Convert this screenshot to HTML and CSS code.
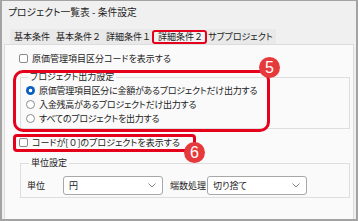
FILE: index.html
```html
<!DOCTYPE html>
<html lang="ja">
<head>
<meta charset="utf-8">
<link rel="stylesheet" href="styles.css">
</head>
<body>
<div class="window">
  <div class="titlebar">プロジェクト一覧表 - 条件設定</div>
  <div class="tabs">
    <span class="tab tab-1">基本条件</span>
    <span class="tab tab-2">基本条件<span class="fw">２</span></span>
    <span class="tab tab-3">詳細条件<span class="fw">１</span></span>
    <span class="tab tab-4 active">詳細条件<span class="fw">２</span></span>
    <span class="tab tab-5">サブプロジェクト</span>
  </div>
  <div class="panel">
    <label class="check-row"><span class="checkbox"></span><span>原価管理項目区分コードを表示する</span></label>
    <fieldset class="group group-output">
      <legend>プロジェクト出力設定</legend>
      <label class="radio-row"><span class="radio checked"></span><span>原価管理項目区分に金額があるプロジェクトだけ出力する</span></label>
      <label class="radio-row"><span class="radio"></span><span>入金残高があるプロジェクトだけ出力する</span></label>
      <label class="radio-row"><span class="radio"></span><span>すべてのプロジェクトを出力する</span></label>
    </fieldset>
    <label class="check-row check-zero"><span class="checkbox"></span><span>コードが[<span class="fw">０</span>]のプロジェクトを表示する</span></label>
    <fieldset class="group group-unit">
      <legend>単位設定</legend>
      <div class="unit-row">
        <span class="field-label">単位</span>
        <span class="select select-unit"><span>円</span><svg class="chev" viewBox="0 0 8 5" width="8" height="5"><path d="M0.5 0.5 L4 4 L7.5 0.5" fill="none" stroke="#777" stroke-width="0.9"/></svg></span>
        <span class="label-round">端数処理</span>
        <span class="select select-round"><span>切り捨て</span><svg class="chev" viewBox="0 0 8 5" width="8" height="5"><path d="M0.5 0.5 L4 4 L7.5 0.5" fill="none" stroke="#777" stroke-width="0.9"/></svg></span>
      </div>
    </fieldset>
  </div>
  <div class="mark mark-5"></div>
  <div class="mark mark-6"></div>
  <div class="badge badge-5">5</div>
  <div class="badge badge-6">6</div>
</div>
</body>
</html>
```

FILE: styles.css
```css
* { box-sizing: border-box; }
html, body { margin: 0; padding: 0; background: #ffffff; }
body {
  font-family: "Noto Sans CJK JP", "Noto Sans", sans-serif;
  font-size: 9px;
  font-feature-settings: "palt";
  color: #1b1b1b;
}
.fw { font-feature-settings: normal; }
.window {
  position: relative;
  width: 358px;
  height: 221px;
  background: #f0f0f0;
  border: 2px solid #a3a3a3;
  border-top: 1px solid #a3a3a3;
  display: flex;
  flex-direction: column;
  overflow: hidden;
}
.titlebar {
  height: 28px;
  padding: 4px 0 0 6px;
  line-height: 14px;
  font-size: 9.8px;
  color: #222;
}
.tabs {
  height: 15px;
  margin: 0 2px;
  display: flex;
  align-items: center;
  padding-left: 6px;
}
.tab {
  height: 15px;
  line-height: 15px;
  padding: 0 2px 0 3px;
  background: #e9e9e9;
  white-space: nowrap;
}
.tab-1 { padding-left: 4px; padding-right: 3px; }
.tab-3 { padding-right: 1px; }
.tab-5 { padding: 0 3px 0 1px; }
.tab.active {
  height: 14px;
  line-height: 10px;
  padding: 0 2px 0 4px;
  border: 2px solid #e5001b;
  border-radius: 3px;
  background: #f2f2f2;
  margin-top: 1px;
}
.panel {
  flex: 1;
  margin: 0 2px;
  background: #fafafa;
  border: 1px solid #dcdcdc;
  border-bottom: none;
  padding: 6px 3px 0 14px;
  display: flex;
  flex-direction: column;
}
.check-row {
  display: flex;
  align-items: center;
  height: 14px;
  gap: 4px;
}
.checkbox {
  width: 9px;
  height: 9px;
  border: 1px solid #8b8b8b;
  border-radius: 2px;
  background: #fff;
  flex: none;
}
.group {
  margin: 6px 0 0 1px;
  border: 1px solid #dedede;
  padding: 0 0 3px 5px;
  min-width: 0;
}
.group legend {
  padding: 0 2px;
  margin-left: 2px;
  line-height: 12px;
  height: 12px;
  color: #222;
}
.radio-row {
  display: flex;
  align-items: center;
  height: 14px;
  gap: 4px;
  letter-spacing: -0.25px;
}
.radio {
  width: 9px;
  height: 9px;
  border-radius: 50%;
  border: 1px solid #8b8b8b;
  background: #fff;
  flex: none;
}
.radio.checked {
  border: none;
  background: radial-gradient(circle, #ffffff 0 1.6px, #0a5fc2 2.1px);
}
.check-zero { margin-top: 6px; }
.group-unit { margin-top: 8px; padding: 7px 0 2px 6px; }
.unit-row {
  display: flex;
  align-items: center;
  height: 19px;
}
.field-label { width: 36px; }
.label-round { white-space: nowrap; margin: 0 1px 0 7px; }
.select {
  height: 19px;
  width: 100px;
  background: #fff;
  border: 1px solid #a8a8a8;
  border-radius: 3px;
  display: flex;
  align-items: center;
  justify-content: space-between;
  padding: 0 6px 0 5px;
}
.chev { flex: none; }
.mark {
  position: absolute;
  border: 3px solid #e5001b;
}
.mark-5 { left: 11px; top: 69px; width: 257px; height: 62px; border-radius: 10px; }
.mark-6 { left: 11px; top: 133px; width: 183px; height: 18px; border-radius: 4px; }
.badge {
  position: absolute;
  width: 21px;
  height: 21px;
  border-radius: 50%;
  background: #e6393b;
  color: #fff;
  font-family: "Liberation Sans", Arial, sans-serif;
  font-size: 16px;
  line-height: 21px;
  text-align: center;
}
.badge-5 { left: 257px; top: 56px; }
.badge-6 { left: 182px; top: 141px; }
```
